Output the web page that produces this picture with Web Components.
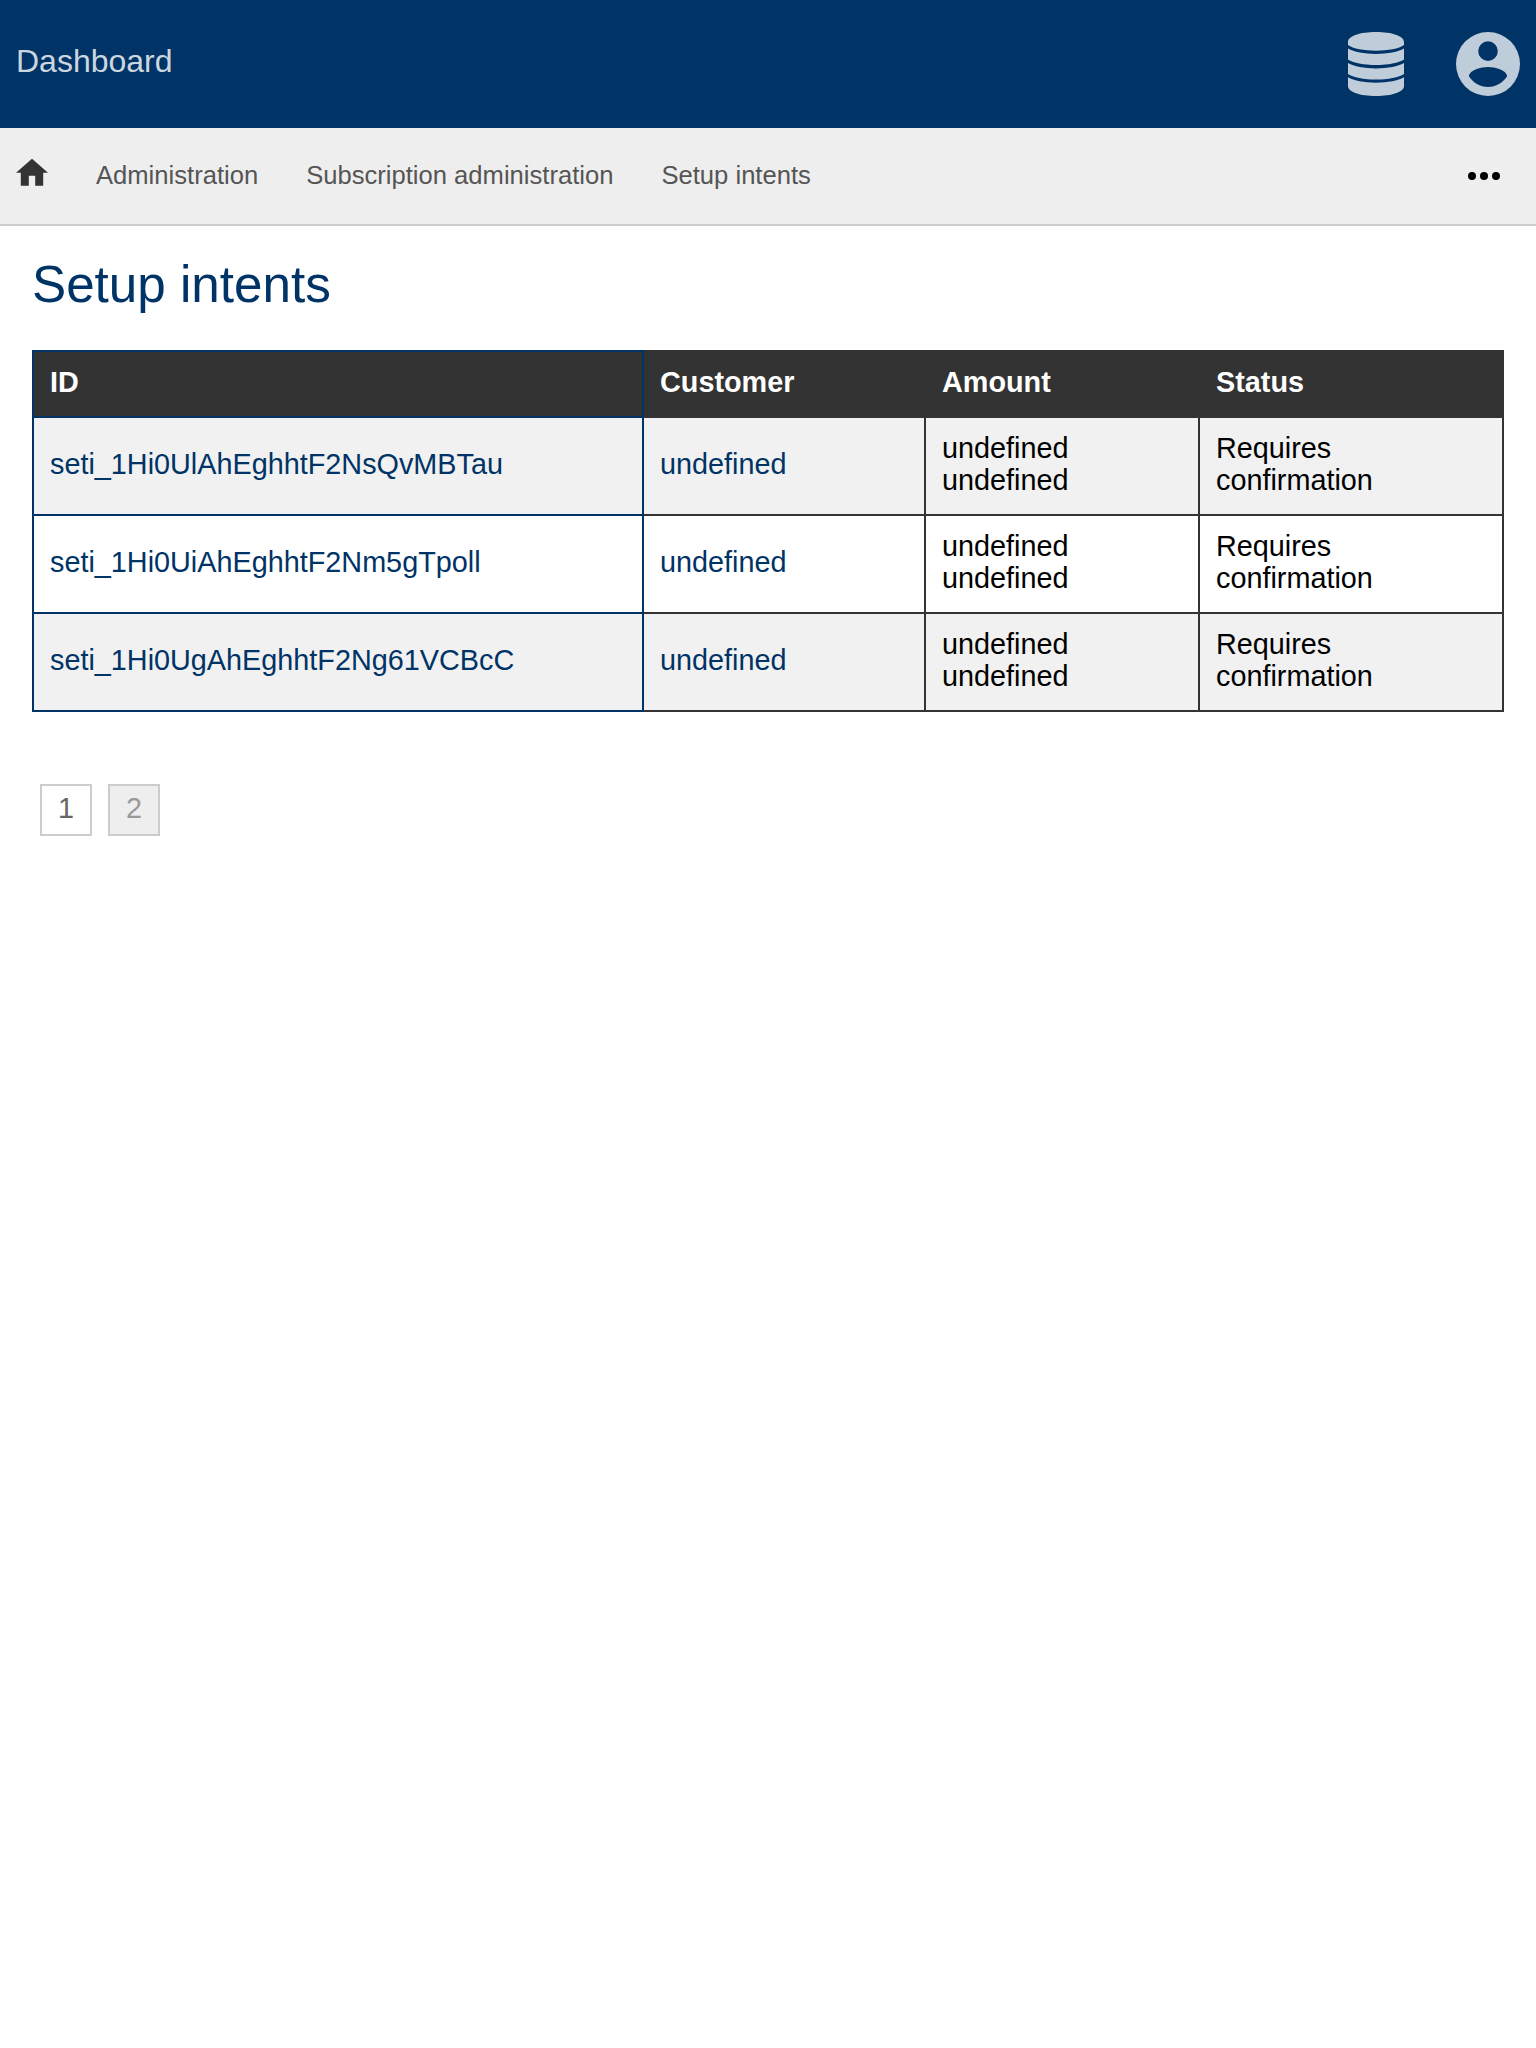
<!DOCTYPE html>
<html lang="en">
<head>
<meta charset="utf-8">
<title>Setup intents</title>
<style>
body{margin:0;background:#fff;font-family:"Liberation Sans",Arial,sans-serif;color:#000}
</style>
</head>
<body>
<dash-header>Dashboard</dash-header>
<dash-nav>
  <nav-crumb>Administration</nav-crumb>
  <nav-crumb>Subscription administration</nav-crumb>
  <nav-crumb>Setup intents</nav-crumb>
</dash-nav>
<page-content heading="Setup intents">
  <intents-table></intents-table>
  <page-links></page-links>
</page-content>
<script>
function define(name, html) {
  const template = document.createElement('template');
  template.innerHTML = html;
  customElements.define(name, class extends HTMLElement {
    constructor() {
      super();
      this.attachShadow({mode: 'open'}).append(template.content.cloneNode(true));
    }
    connectedCallback() {
      const title = this.shadowRoot.querySelector('[data-heading]');
      if (title) title.textContent = this.getAttribute('heading');
    }
  });
}

define('dash-header', `
<style>
:host{display:flex;justify-content:space-between;height:128px;background:#036;box-sizing:border-box;padding:32px 16px}
.title{font-size:32px;line-height:37px;padding-top:11px;color:#ccd6e0}
.icons{display:flex;gap:52px}
svg{display:block;fill:#bfccd9}
</style>
<div class="title"><slot></slot></div>
<div class="icons">
<svg width="56" height="64" viewBox="0 0 56 64"><path d="M0 10C0 4 12 0 28 0s28 4 28 10v3c-5 3.700-16 5.700-28 5.700S5 16.700 0 13zM0 16.600C6 20 16 22 28 22s22-2 28-5.400v11C51 31 40 33.100 28 33.100S5 31 0 27.600zM0 31c6 3.500 16 5.400 28 5.400S50 34.500 56 31v11c-5 3.500-16 5.500-28 5.500S5 45.500 0 42zM0 45.300c6 3.500 16 5.400 28 5.400s22-1.900 28-5.400V54c0 6-12 10-28 10S0 60 0 54z"/></svg>
<svg width="64" height="64" viewBox="0 0 64 64"><path fill-rule="evenodd" d="M32 0a32 32 0 1 0 0 64 32 32 0 0 0 0-64zM32 9.300a9.800 9.800 0 1 1 0 19.600 9.800 9.800 0 0 1 0-19.600zM32 55c-8 0-15-4.200-19.200-11 .9-6 12.400-9 19.200-9s18.300 3 19.200 9c-4.200 6.800-11.200 11-19.200 11z"/></svg>
</div>`);

define('dash-nav', `
<style>
:host{display:flex;align-items:center;height:98px;box-sizing:border-box;background:#eee;border-bottom:2px solid #ccc;padding:0 36px 0 16px}
svg{display:block}
.home{margin-bottom:8px}
.crumbs{display:flex;gap:48px;margin-left:48px;margin-bottom:2px;flex:1}
</style>
<svg class="home" width="32" height="28" viewBox="0 0 32 28" fill="#333"><path d="M16 .7L0 14.700h4.800V27.700h8V17.700h6.400v10h8V14.700H32z"/></svg>
<div class="crumbs"><slot></slot></div>
<svg width="32" height="8" viewBox="0 0 32 8"><circle cx="4" cy="4" r="4"/><circle cx="16" cy="4" r="4"/><circle cx="28" cy="4" r="4"/></svg>`);

define('nav-crumb', `
<style>:host{display:block;font-size:25.600px;line-height:30px;color:#555;white-space:nowrap}</style><slot></slot>`);

define('page-content', `
<style>
:host{display:block;padding:30px 32px 0}
h1{margin:0 0 36px;font-size:51.200px;line-height:58px;font-weight:400;color:#036}
</style>
<h1 data-heading></h1><slot></slot>`);

const intents = ['seti_1Hi0UlAhEghhtF2NsQvMBTau', 'seti_1Hi0UiAhEghhtF2Nm5gTpoll', 'seti_1Hi0UgAhEghhtF2Ng61VCBcC'];
define('intents-table', `
<style>
:host{display:block}
table{width:1472px;table-layout:fixed;border-collapse:collapse;font-size:28.800px;line-height:32px}
th,td{border:2px solid #333;padding:14px 16px 18px;text-align:left;vertical-align:middle}
th{background:#333;color:#fff}
tbody tr:nth-child(odd){background:#f1f1f1}
th:first-child,td:first-child{border-color:#036}
td:nth-child(-n+2){color:#036}
</style>
<table>
<colgroup><col style="width:610px"><col style="width:282px"><col style="width:274px"><col style="width:304px"></colgroup>
<thead><tr><th>ID</th><th>Customer</th><th>Amount</th><th>Status</th></tr></thead>
<tbody>${intents.map(id => `<tr><td>${id}</td><td>undefined</td><td>undefined<br>undefined</td><td>Requires<br>confirmation</td></tr>`).join('')}</tbody>
</table>`);

define('page-links', `
<style>
:host{display:flex;gap:16px;padding:72px 8px 0}
span{box-sizing:border-box;width:52px;height:52px;border:2px solid #ccc;font-size:28.800px;line-height:44px;text-align:center;color:#999;background:#eee}
.current{background:#fff;color:#666}
</style>
<span class="current">1</span><span>2</span>`);
</script>
</body>
</html>
